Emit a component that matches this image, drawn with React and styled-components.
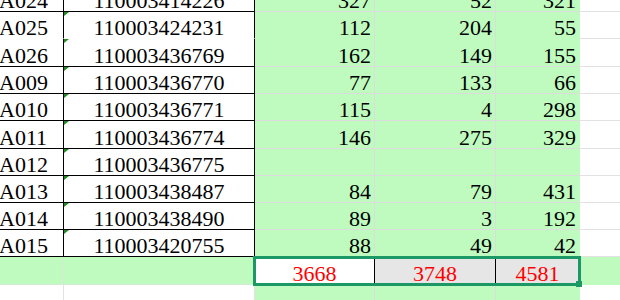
import React from 'react';
import styled, { createGlobalStyle } from 'styled-components';

const GREEN = '#bffbbf';
const SEL = '#1b9866';

const GlobalStyle = createGlobalStyle`
  html, body {
    margin: 0;
    padding: 0;
    background: #fff;
    overflow: hidden;
  }
  body {
    font-family: "Liberation Serif", "Times New Roman", serif;
  }
`;

const Sheet = styled.div`
  position: relative;
  display: grid;
  grid-template-columns: 64px 191px 120px 121px 84px 1fr;
  grid-template-rows: 27px 27px 28px 27px 27px 28px 27px 27px 27px 27px 28px 27px;
  margin-top: -15px;
  width: 620px;
  font-size: 22px;
  line-height: 20px;
  color: #000;
`;

const Cell = styled.div`
  position: relative;
  display: flex;
  align-items: flex-end;
  box-sizing: border-box;
  overflow: hidden;
  white-space: nowrap;
`;

// column A / B tone: table rows have black borders, sum row is green, below is plain
const toneBg = { table: '#fff', sum: GREEN, empty: '#fff' };
const toneLine = { table: '#000', sum: '#d6e9d6', empty: '#e2e2e2' };

const IdCell = styled(Cell)`
  background: ${p => toneBg[p.$tone]};
  border-right: 1px solid ${p => toneLine[p.$tone]};
  border-bottom: 1px solid ${p => (p.$open ? toneBg[p.$tone] : toneLine[p.$tone])};
  justify-content: flex-start;
  padding-left: 0;
  margin-left: -1px;
`;

const CodeCell = styled(Cell)`
  background: ${p => toneBg[p.$tone]};
  border-right: 1px solid ${p => toneLine[p.$tone]};
  border-bottom: 1px solid ${p => (p.$open ? toneBg[p.$tone] : toneLine[p.$tone])};
  justify-content: center;
`;

const Flag = styled.span`
  position: absolute;
  top: 0;
  left: 0;
  width: 0;
  height: 0;
  border-top: 4px solid #228b22;
  border-right: 5px solid transparent;
`;

const NumCell = styled(Cell)`
  background: ${GREEN};
  border-right: 1px solid ${p => (p.$last ? GREEN : '#dcdcdc')};
  border-bottom: 1px solid ${p => (p.$open ? GREEN : '#dcdcdc')};
  justify-content: flex-end;
  padding-right: 3px;
`;

const SumCell = styled(Cell)`
  background: ${p => (p.$shade ? '#e6e6e6' : '#fff')};
  border-right: 1px solid #000;
  border-bottom: 1px solid #dcdcdc;
  justify-content: center;
  color: #ff0000;
`;

const EdgeCell = styled(Cell)`
  background: ${p => (p.$fill ? GREEN : '#fff')};
  border-bottom: 1px solid ${p => (p.$fill ? GREEN : '#e2e2e2')};
`;

const Selection = styled.div`
  position: absolute;
  left: 253px;
  top: 271px;
  width: 328px;
  height: 30px;
  box-sizing: border-box;
  border: 3px solid ${SEL};
  pointer-events: none;
`;

const Handle = styled.span`
  position: absolute;
  right: -4px;
  bottom: -4px;
  width: 6px;
  height: 6px;
  background: ${SEL};
`;

const rows = [
  ['A024', '110003414226', '327', '52', '321'],
  ['A025', '110003424231', '112', '204', '55', true],
  ['A026', '110003436769', '162', '149', '155'],
  ['A009', '110003436770', '77', '133', '66'],
  ['A010', '110003436771', '115', '4', '298'],
  ['A011', '110003436774', '146', '275', '329'],
  ['A012', '110003436775', '', '', ''],
  ['A013', '110003438487', '84', '79', '431'],
  ['A014', '110003438490', '89', '3', '192'],
  ['A015', '110003420755', '88', '49', '42'],
];

const totals = ['3668', '3748', '4581'];

export default function App() {
  return (
    <>
      <GlobalStyle />
      <Sheet>
        {rows.map(([id, code, c, d, e, open]) => (
          <React.Fragment key={id}>
            <IdCell $tone="table" $open={open}>{id}</IdCell>
            <CodeCell $tone="table" $open={open}>
              <Flag />
              {code}
            </CodeCell>
            <NumCell $open={open}>{c}</NumCell>
            <NumCell $open={open}>{d}</NumCell>
            <NumCell $open={open} $last>{e}</NumCell>
            <EdgeCell $fill={false} />
          </React.Fragment>
        ))}

        <IdCell $tone="sum" />
        <CodeCell $tone="sum" />
        {totals.map((t, i) => (
          <SumCell key={t} $shade={i > 0}>{t}</SumCell>
        ))}
        <EdgeCell $fill />

        <IdCell $tone="empty" />
        <CodeCell $tone="empty" />
        <NumCell />
        <NumCell />
        <NumCell $last />
        <EdgeCell />

        <Selection>
          <Handle />
        </Selection>
      </Sheet>
    </>
  );
}
